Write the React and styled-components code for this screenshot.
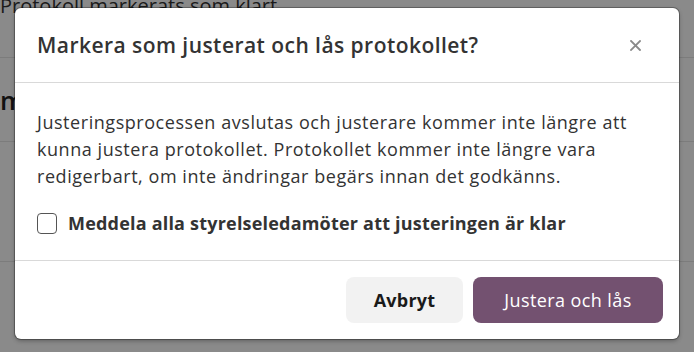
import React from "react";
import styled, { createGlobalStyle } from "styled-components";

const Global = createGlobalStyle`
  html, body { margin: 0; padding: 0; }
  body { font-family: "Open Sans", "Noto Sans", sans-serif; background: #fff; }
  * { box-sizing: border-box; }
`;

const Page = styled.div`
  position: relative;
  width: 694px;
  height: 352px;
  overflow: hidden;
  background: #fff;
`;

const BackHeading = styled.div`
  font-size: 20px;
  color: #333;
  line-height: 12px;
  height: 58px;
  overflow: hidden;
  border-bottom: 1px solid #e6e6e6;
`;

const BackRow = styled.div`
  height: ${(p) => p.$h}px;
  border-bottom: 1px solid #e6e6e6;
  font-size: 26px;
  font-weight: 600;
  color: #222;
  display: flex;
  align-items: center;
`;

const Overlay = styled.div`
  position: absolute;
  inset: 0;
  background: rgba(0, 0, 0, 0.46);
  display: flex;
  align-items: flex-start;
  padding: 8px 15px 0;
`;

const Dialog = styled.div`
  width: 664px;
  height: 331px;
  background: #fff;
  border-radius: 6px;
  box-shadow: 0 0 0 1px rgba(0, 0, 0, 0.28), 0 2px 4px rgba(0, 0, 0, 0.3);
  display: flex;
  flex-direction: column;
`;

const Header = styled.div`
  height: 75px;
  display: flex;
  align-items: center;
  justify-content: space-between;
  padding: 0 37px 0 22px;
  border-bottom: 1px solid #d9d9d9;
`;

const Title = styled.h2`
  margin: 0;
  font-size: 21px;
  font-weight: 600;
  letter-spacing: 0.45px;
  color: #333;
`;

const Close = styled.button`
  border: 0;
  background: none;
  padding: 0;
  width: 14px;
  height: 14px;
  display: flex;
  align-items: center;
  justify-content: center;
  cursor: pointer;
`;

const Body = styled.div`
  flex: 1;
  padding: 26px 22px 0;
  border-bottom: 1px solid #d9d9d9;
`;

const Text = styled.p`
  margin: 0;
  font-size: 18px;
  line-height: 27px;
  letter-spacing: 0.55px;
  color: #333;
`;

const CheckRow = styled.label`
  display: flex;
  align-items: center;
  gap: 11px;
  margin-top: 21px;
  font-size: 18px;
  font-weight: 700;
  letter-spacing: 0.2px;
  color: #333;
`;

const Box = styled.span`
  width: 20px;
  height: 21px;
  border: 1.5px solid #555;
  border-radius: 4px;
  background: #fff;
  flex: none;
`;

const Footer = styled.div`
  height: 78px;
  display: flex;
  align-items: center;
  justify-content: flex-end;
  gap: 10px;
  padding: 0 16px;
`;

const Button = styled.button`
  height: 46px;
  width: ${(p) => p.$w}px;
  border: 0;
  border-radius: 8px;
  font-family: inherit;
  font-size: 18px;
  font-weight: ${(p) => (p.$primary ? 500 : 700)};
  letter-spacing: ${(p) => (p.$primary ? "0.4px" : "0.2px")};
  background: ${(p) => (p.$primary ? "#735170" : "#f2f2f2")};
  color: ${(p) => (p.$primary ? "#fff" : "#1a1a1a")};
  cursor: pointer;
`;

export default function App() {
  return (
    <Page>
      <Global />
      <BackHeading>Protokoll markerats som klart</BackHeading>
      <BackRow $h={84}>m</BackRow>
      <BackRow $h={120} />
      <Overlay>
        <Dialog role="dialog">
          <Header>
            <Title>Markera som justerat och lås protokollet?</Title>
            <Close aria-label="Stäng">
              <svg width="11" height="11" viewBox="0 0 11 11">
                <path d="M1 1L10 10M10 1L1 10" stroke="#8a8a8a" strokeWidth="1.8" strokeLinecap="square" />
              </svg>
            </Close>
          </Header>
          <Body>
            <Text>
              Justeringsprocessen avslutas och justerare kommer inte längre att kunna justera protokollet.
              Protokollet kommer inte längre vara redigerbart, om inte ändringar begärs innan det godkänns.
            </Text>
            <CheckRow>
              <Box />
              Meddela alla styrelseledamöter att justeringen är klar
            </CheckRow>
          </Body>
          <Footer>
            <Button $w={117}>Avbryt</Button>
            <Button $w={190} $primary>Justera och lås</Button>
          </Footer>
        </Dialog>
      </Overlay>
    </Page>
  );
}
